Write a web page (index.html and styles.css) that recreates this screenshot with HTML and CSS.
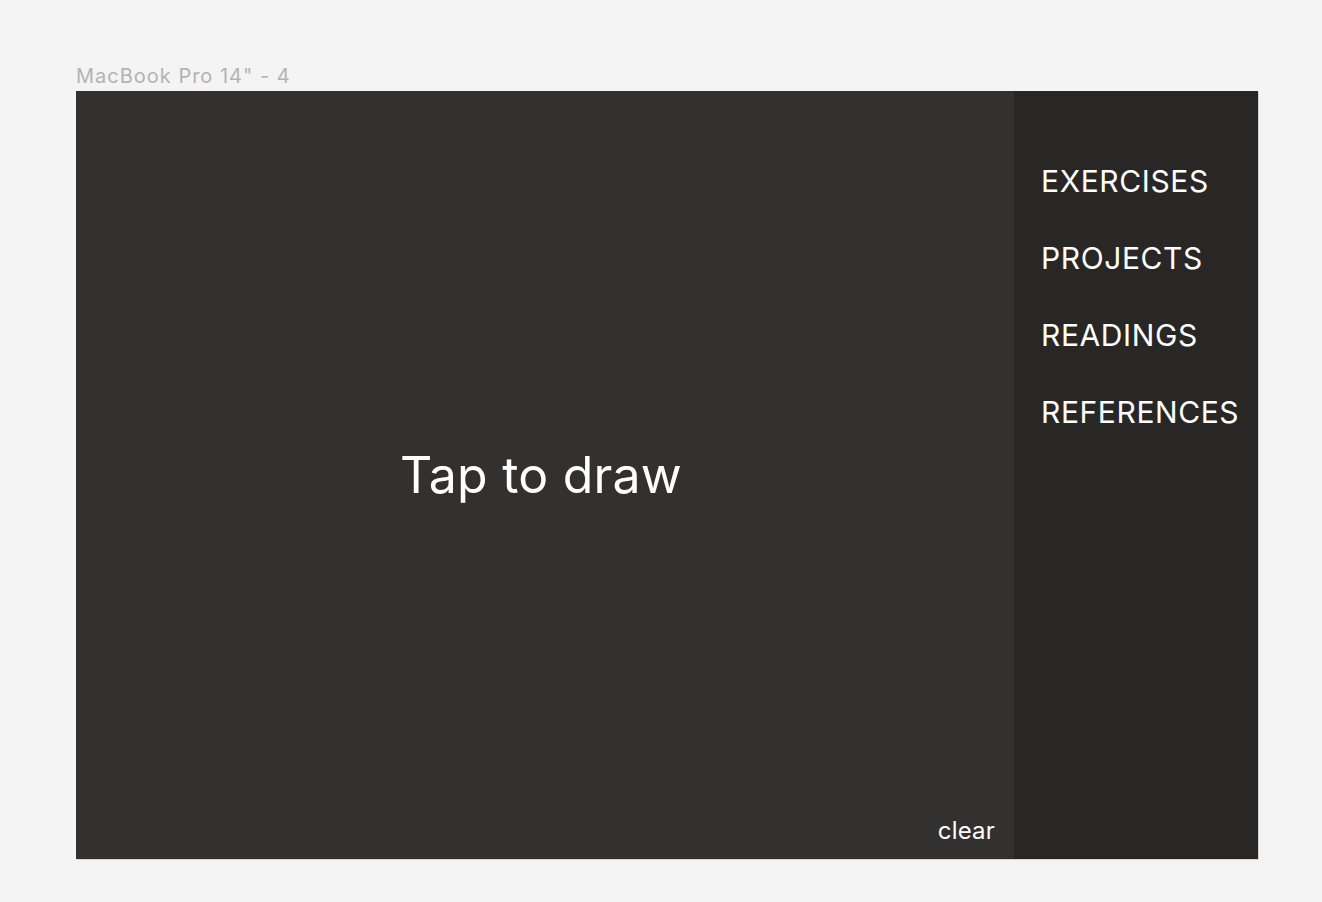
FILE: index.html
```html
<!DOCTYPE html>
<html lang="en">
<head>
<meta charset="utf-8">
<title>MacBook Pro 14" - 4</title>
<link rel="stylesheet" href="styles.css">
</head>
<body>
<div class="page">
  <div class="frame-label">MacBook Pro 14" - 4</div>
  <div class="frame">
    <main class="canvas">
      <div class="prompt">Tap to draw</div>
      <button class="clear">clear</button>
    </main>
    <nav class="sidebar">
      <a class="nav-item">EXERCISES</a>
      <a class="nav-item">PROJECTS</a>
      <a class="nav-item">READINGS</a>
      <a class="nav-item">REFERENCES</a>
    </nav>
  </div>
</div>
</body>
</html>
```
FILE: styles.css
```css
html, body {
  margin: 0;
  padding: 0;
  background: #f4f4f4;
  font-family: Inter, "Noto Sans", sans-serif;
}
.page {
  width: 1322px;
  height: 902px;
  padding: 64px 0 0 76px;
  box-sizing: border-box;
  display: flex;
  flex-direction: column;
}
.frame-label {
  font-size: 20px;
  line-height: 24px;
  letter-spacing: 1px;
  color: #b3b3b3;
  margin-bottom: 3px;
}
.frame {
  width: 1182px;
  height: 768px;
  display: flex;
  box-shadow: 1px 1px 0 #d4d4d4;
}
.canvas {
  flex: 0 0 938px;
  background: #323130;
  display: grid;
  grid-template: 1fr / 1fr;
}
.prompt {
  grid-area: 1 / 1;
  place-self: center;
  color: #ffffff;
  font-size: 50px;
  line-height: 60px;
  letter-spacing: 0.2px;
  margin-right: 8px;
}
.clear {
  grid-area: 1 / 1;
  justify-self: end;
  align-self: end;
  background: none;
  border: 0;
  padding: 0;
  margin: 0 19px 14px 0;
  font-family: inherit;
  font-size: 24px;
  line-height: 29px;
  letter-spacing: 0.2px;
  color: #ffffff;
}
.sidebar {
  flex: 1;
  background: #282725;
  display: flex;
  flex-direction: column;
  gap: 41px;
  padding: 72px 0 0 27px;
}
.nav-item {
  color: #ffffff;
  font-size: 30px;
  line-height: 36px;
  letter-spacing: 0.6px;
}
```
